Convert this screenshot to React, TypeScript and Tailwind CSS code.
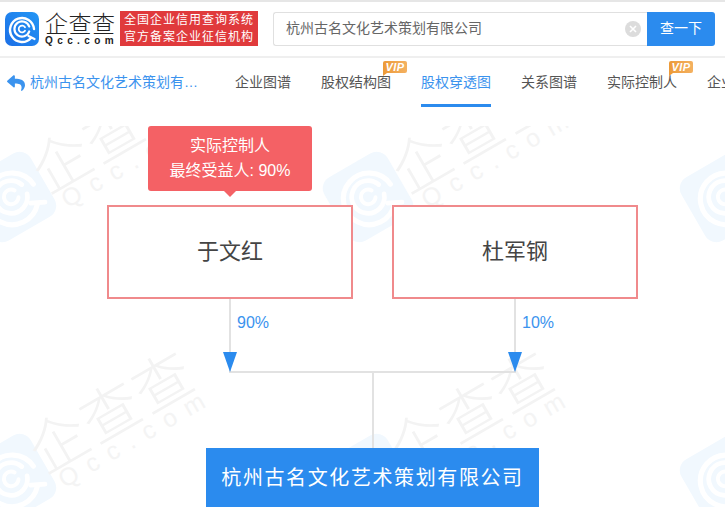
import { FaReply } from "react-icons/fa";

const navItems = [
  { label: "企业图谱" },
  { label: "股权结构图", vip: true },
  { label: "股权穿透图", active: true },
  { label: "关系图谱" },
  { label: "实际控制人", vip: true },
  { label: "企业图谱" },
];

const LogoRings = ({ stroke }: { stroke: string }) => (
  <g fill="none" stroke={stroke} strokeLinecap="round">
    <path d="M26 26 A12 12 0 1 1 29 17" strokeWidth="2.4" />
    <path d="M24.2 19.5 A7.6 7.6 0 1 1 24.2 14.5" strokeWidth="2.2" />
    <path d="M20 15.2 A3.4 3.4 0 1 0 20 18.8" strokeWidth="1.8" />
    <path d="M23.5 24 L29.5 27" strokeWidth="2.2" />
  </g>
);

const Logo = () => (
  <svg width="34" height="34" viewBox="0 0 34 34" className="shrink-0">
    <defs>
      <linearGradient id="logoBg" x1="0" y1="1" x2="1" y2="0">
        <stop offset="0" stopColor="#1c6fe6" />
        <stop offset="1" stopColor="#2396f5" />
      </linearGradient>
    </defs>
    <rect width="34" height="34" rx="7" fill="url(#logoBg)" />
    <LogoRings stroke="#ffffff" />
  </svg>
);

const WatermarkMark = ({ x, y }: { x: number; y: number }) => (
  <g transform={`translate(${x} ${y}) rotate(-30) scale(2.15) translate(-17 -17)`}>
    <rect width="34" height="34" rx="6" fill="#f1f8fe" />
    <LogoRings stroke="#ffffff" />
  </g>
);

const WatermarkText = ({ x, y }: { x: number; y: number }) => (
  <g transform={`translate(${x} ${y}) rotate(-30)`}>
    <text x="0" y="0" fontSize="58" letterSpacing="2" fill="#f3f3f3" fontWeight="300">
      企查查
    </text>
    <text x="11" y="22" fontSize="25" letterSpacing="11" fill="#f4f4f4" fontFamily="Liberation Sans">
      Qcc.com
    </text>
  </g>
);

// faint repeated brand mark behind the chart
const Watermark = () => (
  <svg
    width="725"
    height="400"
    viewBox="0 107 725 400"
    className="absolute inset-x-0 top-0 font-['Noto_Sans_CJK_SC',sans-serif]"
  >
    <WatermarkMark x={11} y={178} />
    <WatermarkMark x={368} y={178} />
    <WatermarkMark x={725} y={178} />
    <WatermarkMark x={11} y={460} />
    <WatermarkMark x={368} y={460} />
    <WatermarkMark x={725} y={460} />
    <WatermarkText x={47} y={176} />
    <WatermarkText x={407} y={176} />
    <WatermarkText x={44} y={456} />
    <WatermarkText x={404} y={456} />
  </svg>
);

const PersonBox = ({ name }: { name: string }) => (
  <div className="flex h-[94px] w-[246px] items-center justify-center border-2 border-[#f08a8c] bg-white pb-[2px] text-[22px] text-[#444]">
    {name}
  </div>
);

const Connectors = () => (
  <svg width="725" height="149" viewBox="0 0 725 149" className="block">
    <g stroke="#e2e2e2" strokeWidth="2" fill="none">
      <path d="M230 0V73H515V0" />
      <path d="M373 73V149" />
    </g>
    <path d="M223 53H237L230 73Z" fill="#2b8bee" />
    <path d="M508 53H522L515 73Z" fill="#2b8bee" />
  </svg>
);

export default function App() {
  return (
    <div className="relative h-[507px] w-[725px] overflow-hidden bg-white font-['Liberation_Sans','Noto_Sans_CJK_SC',sans-serif] text-[#555]">
      {/* Top bar */}
      <header className="flex h-[58px] items-center border-t-2 border-b-2 border-t-[#e6e6e6] border-b-[#efefef] pb-[1px] pl-[5px]">
        <Logo />
        <div className="ml-[6px] flex w-[71px] shrink-0 flex-col whitespace-nowrap font-['Noto_Sans_CJK_SC',sans-serif] text-[#222]">
          <span className="text-[23px] font-light leading-[23px] tracking-[0.5px]">企查查</span>
          <span className="mt-[2px] font-['Liberation_Sans',sans-serif] text-[10px] font-bold leading-[10px] tracking-[4.4px]">
            Qcc.com
          </span>
        </div>
        <div className="ml-[4px] flex h-[35px] w-[138px] shrink-0 flex-col items-center justify-center bg-[#e03a3c] text-[12px] leading-[17px] tracking-[1px] text-white">
          <span>全国企业信用查询系统</span>
          <span>官方备案企业征信机构</span>
        </div>
        <div className="ml-[15px] flex h-[34px] w-[374px] shrink-0 items-center justify-between rounded-l-[3px] border border-r-0 border-[#e0e0e0] pl-3 pr-[6px] text-[14px] text-[#666]">
          <span>杭州古名文化艺术策划有限公司</span>
          <svg width="16" height="16" viewBox="0 0 16 16">
            <circle cx="8" cy="8" r="8" fill="#dcdcdc" />
            <path d="M5 5L11 11M11 5L5 11" stroke="#fff" strokeWidth="1.6" />
          </svg>
        </div>
        <button className="flex h-[34px] w-[68px] shrink-0 items-center justify-center rounded-r-[3px] bg-[#2b8bee] text-[14px] text-white">
          查一下
        </button>
      </header>

      {/* Nav row */}
      <nav className="flex h-[49px] items-center overflow-hidden whitespace-nowrap text-[14px]">
        <div className="flex h-full w-[235px] shrink-0 items-center pl-[7px] text-[#3b93ee]">
          <FaReply className="h-[18px] w-[18px] shrink-0" />
          <span className="ml-[5px] w-[170px] truncate">杭州古名文化艺术策划有限公司</span>
        </div>
        <div className="flex h-full gap-[30px]">
          {navItems.map((item, i) => (
            <div
              key={i}
              className={`relative flex h-full shrink-0 items-center border-b-[3px] pt-[2px] ${
                item.active ? "border-[#2b8bee] text-[#3b93ee]" : "border-transparent"
              }`}
            >
              {item.label}
              {item.vip && (
                <span className="absolute left-[62px] top-[3px] flex h-[12px] w-[24px] items-center justify-center rounded-[2px] rounded-bl-none bg-gradient-to-r from-[#ec9a38] to-[#f4b160] text-[11px] font-bold italic tracking-[0.5px] text-white">
                  VIP
                  <span className="absolute -bottom-[3px] left-0 h-0 w-0 border-r-[4px] border-t-[3px] border-r-transparent border-t-[#ec9a38]" />
                </span>
              )}
            </div>
          ))}
        </div>
      </nav>

      {/* Chart */}
      <main className="relative h-[400px]">
        <Watermark />
        <div className="relative">
          <div className="relative ml-[148px] mt-[19px] flex h-[65px] w-[164px] flex-col items-center justify-center rounded-[3px] bg-[#f46165] pb-[2px] text-[16px] leading-[25px] text-white">
            <span>实际控制人</span>
            <span>最终受益人: 90%</span>
            <span className="absolute -bottom-[6px] left-[76px] h-0 w-0 border-x-[6px] border-t-[6px] border-x-transparent border-t-[#f46165]" />
          </div>
          <div className="mt-[14px] flex gap-[39px] pl-[107px]">
            <PersonBox name="于文红" />
            <PersonBox name="杜军钢" />
          </div>
          <div className="relative">
            <Connectors />
            <span className="absolute left-[237px] top-[14px] text-[16px] leading-[20px] text-[#3b93ee]">90%</span>
            <span className="absolute left-[522px] top-[14px] text-[16px] leading-[20px] text-[#3b93ee]">10%</span>
          </div>
          <div className="ml-[206px] flex h-[59px] w-[333px] items-center justify-center bg-[#2b8bee] text-[20px] tracking-[1.6px] text-white">
            杭州古名文化艺术策划有限公司
          </div>
        </div>
      </main>
    </div>
  );
}
